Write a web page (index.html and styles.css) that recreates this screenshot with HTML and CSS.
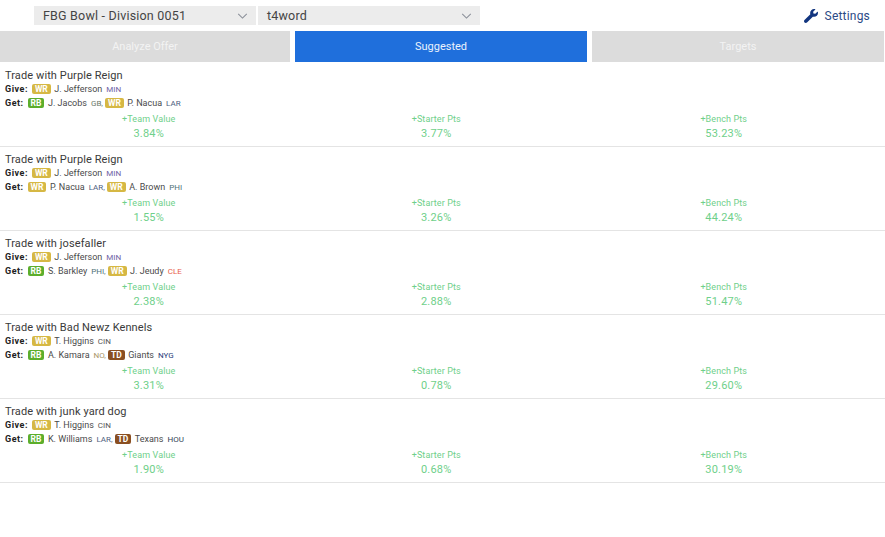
FILE: index.html
```html
<!DOCTYPE html>
<html>
<head>
  <meta charset="UTF-8">
  <title>Trade Calculator</title>
  <link rel="stylesheet" href="styles.css">
</head>
<body>
  <!-- League and team pickers -->
  <div class="topbar">
    <div class="picker">FBG Bowl - Division 0051<svg class="chevron" viewBox="0 0 12 7"><path d="M1 1l5 5 5-5"/></svg></div>
    <div class="picker">t4word<svg class="chevron" viewBox="0 0 12 7"><path d="M1 1l5 5 5-5"/></svg></div>
    <div class="settings">
      <svg class="wrench" viewBox="0 0 512 512"><path d="M507.700 109.100c-2.200-9-13.500-12.100-20.100-5.500l-74.400 74.400-67.900-11.300-11.300-67.900 74.400-74.400c6.600-6.600 3.400-17.900-5.700-20.200-47.400-11.700-99.500.9-136.600 38-39.700 39.700-50.900 97.200-34.200 147L18.700 402.800c-25 25-25 65.500 0 90.500 25 25 65.500 25 90.500 0l213.200-213.200c49.900 16.600 107.300 5.400 147.100-34.400 37.100-37.100 49.700-89.300 38.200-136.600z"/></svg>
      <span>Settings</span>
    </div>
  </div>

  <!-- Tabs -->
  <div class="tabs">
    <div class="tab">Analyze Offer</div>
    <div class="tab active">Suggested</div>
    <div class="tab">Targets</div>
  </div>

  <!-- Trade list -->
  <div class="trade">
    <div class="trade-title">Trade with Purple Reign</div>
    <div class="line"><b>Give:</b><span class="pos wr">WR</span><span class="name">J. Jefferson</span><span class="team min">MIN</span></div>
    <div class="line"><b>Get:</b><span class="pos rb">RB</span><span class="name">J. Jacobs</span><span class="team gb">GB,</span><span class="pos wr">WR</span><span class="name">P. Nacua</span><span class="team lar">LAR</span></div>
    <div class="stats">
      <div class="stat"><div class="stat-label">+Team Value</div><div class="stat-value">3.84%</div></div>
      <div class="stat"><div class="stat-label">+Starter Pts</div><div class="stat-value">3.77%</div></div>
      <div class="stat"><div class="stat-label">+Bench Pts</div><div class="stat-value">53.23%</div></div>
    </div>
  </div>

  <div class="trade">
    <div class="trade-title">Trade with Purple Reign</div>
    <div class="line"><b>Give:</b><span class="pos wr">WR</span><span class="name">J. Jefferson</span><span class="team min">MIN</span></div>
    <div class="line"><b>Get:</b><span class="pos wr">WR</span><span class="name">P. Nacua</span><span class="team lar">LAR,</span><span class="pos wr">WR</span><span class="name">A. Brown</span><span class="team phi">PHI</span></div>
    <div class="stats">
      <div class="stat"><div class="stat-label">+Team Value</div><div class="stat-value">1.55%</div></div>
      <div class="stat"><div class="stat-label">+Starter Pts</div><div class="stat-value">3.26%</div></div>
      <div class="stat"><div class="stat-label">+Bench Pts</div><div class="stat-value">44.24%</div></div>
    </div>
  </div>

  <div class="trade">
    <div class="trade-title">Trade with josefaller</div>
    <div class="line"><b>Give:</b><span class="pos wr">WR</span><span class="name">J. Jefferson</span><span class="team min">MIN</span></div>
    <div class="line"><b>Get:</b><span class="pos rb">RB</span><span class="name">S. Barkley</span><span class="team phi">PHI,</span><span class="pos wr">WR</span><span class="name">J. Jeudy</span><span class="team cle">CLE</span></div>
    <div class="stats">
      <div class="stat"><div class="stat-label">+Team Value</div><div class="stat-value">2.38%</div></div>
      <div class="stat"><div class="stat-label">+Starter Pts</div><div class="stat-value">2.88%</div></div>
      <div class="stat"><div class="stat-label">+Bench Pts</div><div class="stat-value">51.47%</div></div>
    </div>
  </div>

  <div class="trade">
    <div class="trade-title">Trade with Bad Newz Kennels</div>
    <div class="line"><b>Give:</b><span class="pos wr">WR</span><span class="name">T. Higgins</span><span class="team cin">CIN</span></div>
    <div class="line"><b>Get:</b><span class="pos rb">RB</span><span class="name">A. Kamara</span><span class="team no">NO,</span><span class="pos td">TD</span><span class="name">Giants</span><span class="team nyg">NYG</span></div>
    <div class="stats">
      <div class="stat"><div class="stat-label">+Team Value</div><div class="stat-value">3.31%</div></div>
      <div class="stat"><div class="stat-label">+Starter Pts</div><div class="stat-value">0.78%</div></div>
      <div class="stat"><div class="stat-label">+Bench Pts</div><div class="stat-value">29.60%</div></div>
    </div>
  </div>

  <div class="trade">
    <div class="trade-title">Trade with junk yard dog</div>
    <div class="line"><b>Give:</b><span class="pos wr">WR</span><span class="name">T. Higgins</span><span class="team cin">CIN</span></div>
    <div class="line"><b>Get:</b><span class="pos rb">RB</span><span class="name">K. Williams</span><span class="team lar">LAR,</span><span class="pos td">TD</span><span class="name">Texans</span><span class="team hou">HOU</span></div>
    <div class="stats">
      <div class="stat"><div class="stat-label">+Team Value</div><div class="stat-value">1.90%</div></div>
      <div class="stat"><div class="stat-label">+Starter Pts</div><div class="stat-value">0.68%</div></div>
      <div class="stat"><div class="stat-label">+Bench Pts</div><div class="stat-value">30.19%</div></div>
    </div>
  </div>
</body>
</html>
```

FILE: styles.css
```css
body {
  margin: 0;
  font-family: Roboto, sans-serif;
  background-color: #fff;
  color: #333;
}

/* Top bar */
.topbar {
  display: flex;
  align-items: center;
  gap: 2px;
  height: 31px;
  padding: 0 0 0 34px;
  box-sizing: border-box;
}
.picker {
  display: flex;
  align-items: center;
  justify-content: space-between;
  width: 222px;
  height: 19px;
  padding: 0 8px 0 9px;
  box-sizing: border-box;
  background-color: #ececec;
  font-size: 12.5px;
  letter-spacing: 0.2px;
  color: #444;
}
.chevron {
  width: 11px;
  height: 6px;
  fill: none;
  stroke: #8a8f99;
  stroke-width: 1.2;
}
.settings {
  display: flex;
  align-items: center;
  gap: 7px;
  margin-left: auto;
  padding-right: 15px;
  font-size: 12px;
  letter-spacing: 0.2px;
  color: #2c4a86;
}
.wrench {
  width: 14px;
  height: 14px;
  fill: #12357f;
}

/* Tabs */
.tabs {
  display: grid;
  grid-template-columns: 290px 292px 292px;
  gap: 5px;
  height: 31px;
  margin-bottom: 1px;
}
.tab {
  display: flex;
  align-items: center;
  justify-content: center;
  background-color: #dcdcdc;
  color: #f3f3f3;
  font-size: 11px;
}
.tab.active {
  background-color: #1f6fdc;
  color: #eaf2fd;
}

/* Trade rows */
.trade {
  height: 84px;
  padding: 6px 0 0 5px;
  box-sizing: border-box;
  border-bottom: 1px solid #e4e4e4;
}
.trade-title {
  height: 13px;
  line-height: 14px;
  font-size: 11px;
  letter-spacing: 0.1px;
  color: #3a3a3a;
}
.line {
  display: flex;
  align-items: center;
  height: 14px;
  font-size: 9px;
  color: #4a4a4a;
}
.line b {
  color: #222;
  letter-spacing: 0.5px;
  margin-right: 4px;
}
.pos {
  display: inline-block;
  height: 10px;
  line-height: 10px;
  padding: 0 3px;
  border-radius: 2px;
  font-weight: 700;
  font-size: 8.5px;
  color: #fff;
  text-align: center;
  margin-right: 3.5px;
}
.wr { background-color: #d6b844; }
.rb { background-color: #5cae2c; }
.td { background-color: #8a4f22; }
.name {
  margin-right: 4px;
}
.team {
  font-size: 8px;
  margin-right: 2px;
  color: #667;
}
.team.min { color: #6f5fa5; }
.team.gb { color: #6b7a6b; }
.team.lar { color: #4f5f7f; }
.team.phi { color: #4f7278; }
.team.cle { color: #e8604a; }
.team.cin { color: #555; }
.team.no { color: #a8946a; }
.team.nyg { color: #2a3a7a; }
.team.hou { color: #333f55; }

/* Percent columns */
.stats {
  display: grid;
  grid-template-columns: repeat(3, 1fr);
  margin-top: 2px;
  padding-right: 17.500px;
  color: #6fd08a;
  text-align: center;
}
.stat-label {
  height: 14px;
  line-height: 15px;
  font-size: 9px;
  letter-spacing: 0.1px;
}
.stat-value {
  height: 15px;
  line-height: 15px;
  font-size: 11px;
  letter-spacing: 0.2px;
}
```
